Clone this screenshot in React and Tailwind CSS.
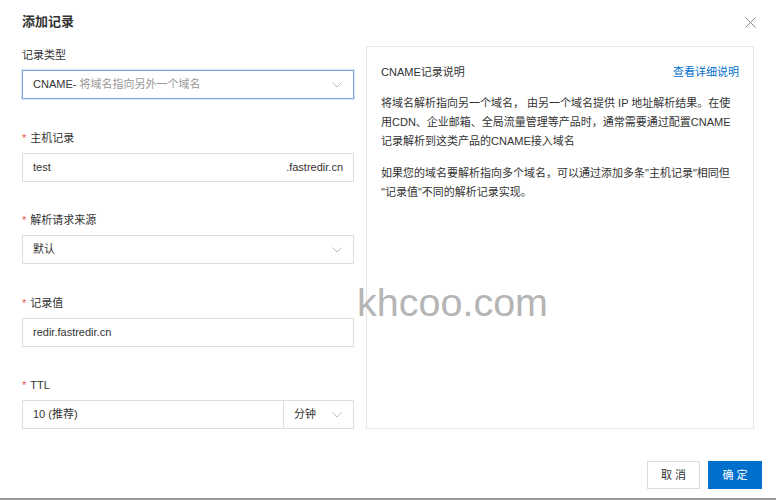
import React from 'react';

const font = { fontFamily: '"Liberation Sans", "Noto Sans CJK SC", sans-serif' };

const Chevron = () => (
  <svg width="10" height="6" viewBox="0 0 10 6" className="shrink-0">
    <path d="M0.5 0.5 L5 5 L9.5 0.5" fill="none" stroke="#bdbdbd" strokeWidth="1" />
  </svg>
);

const Label = ({ required, children }) => (
  <div className="text-[11px] leading-[18px] mb-[6px] text-[#333] flex items-center">
    {required && <span className="text-[#e5574a] mr-[4px] text-[11px]">*</span>}
    {children}
  </div>
);

const App = () => {
  return (
    <div className="relative h-[500px] w-[776px] bg-white border-b-2 border-[#9a9a9a] flex flex-col" style={font}>
      {/* 标题 */}
      <div className="h-[46px] flex items-center justify-between pl-[22px] pr-[20px] pb-[2px]">
        <h2 className="text-[13px] font-semibold text-[#333]">添加记录</h2>
        <svg width="11" height="11" viewBox="0 0 11 11">
          <path d="M0.5 0.5 L10.5 10.5 M10.5 0.5 L0.5 10.5" stroke="#8a8a8a" strokeWidth="1" />
        </svg>
      </div>

      {/* 表单 + 说明 */}
      <div className="flex gap-[12px] px-[22px]">
        <div className="w-[332px] flex flex-col gap-[29.5px]">
          <div>
            <Label>记录类型</Label>
            <div className="h-[29px] border border-[#78abe0] shadow-[0_0_0_1px_#d6e6f7] flex items-center justify-between pl-[10px] pr-[11px] text-[11px]">
              <span>
                <span className="text-[#333]">CNAME-</span>
                <span className="text-[#999]"> 将域名指向另外一个域名</span>
              </span>
              <Chevron />
            </div>
          </div>

          <div>
            <Label required>主机记录</Label>
            <div className="h-[29px] border border-[#dedede] flex items-center justify-between px-[10px] text-[11px] text-[#333]">
              <span>test</span>
              <span>.fastredir.cn</span>
            </div>
          </div>

          <div>
            <Label required>解析请求来源</Label>
            <div className="h-[29px] border border-[#dedede] flex items-center justify-between pl-[10px] pr-[11px] text-[11px] text-[#333]">
              <span>默认</span>
              <Chevron />
            </div>
          </div>

          <div>
            <Label required>记录值</Label>
            <div className="h-[29px] border border-[#dedede] flex items-center px-[10px] text-[11px] text-[#333]">
              redir.fastredir.cn
            </div>
          </div>

          <div>
            <Label required>TTL</Label>
            <div className="h-[29px] border border-[#dedede] flex text-[11px] text-[#333]">
              <div className="flex-1 flex items-center px-[10px] border-r border-[#dedede]">10 (推荐)</div>
              <div className="w-[69px] flex items-center justify-between pl-[10px] pr-[11px]">
                <span>分钟</span>
                <Chevron />
              </div>
            </div>
          </div>
        </div>

        <div className="w-[388px] border border-[#e6e6e6] px-[14px] pt-[16px] text-[11px] text-[#333]">
          <div className="flex items-center justify-between leading-[18px]">
            <span>CNAME记录说明</span>
            <a className="text-[#0070cc] cursor-pointer">查看详细说明</a>
          </div>
          <p className="mt-[13px] leading-[19px] whitespace-nowrap">
            将域名解析指向另一个域名， 由另一个域名提供 IP 地址解析结果。在使
            <br />
            用CDN、企业邮箱、全局流量管理等产品时，通常需要通过配置CNAME
            <br />
            记录解析到这类产品的CNAME接入域名
          </p>
          <p className="mt-[13px] leading-[19px] whitespace-nowrap">
            如果您的域名要解析指向多个域名，可以通过添加多条"主机记录"相同但
            <br />
            "记录值"不同的解析记录实现。
          </p>
        </div>
      </div>

      {/* 底部按钮 */}
      <div className="flex justify-end gap-[8px] px-[14px] mt-[32px]">
        <button className="h-[28px] w-[53px] border border-[#dcdcdc] bg-white text-[11px] text-[#333] tracking-[3px] pl-[3px]">
          取消
        </button>
        <button className="h-[28px] w-[54px] bg-[#0070cc] text-[11px] text-white tracking-[3px] pl-[3px]">
          确定
        </button>
      </div>

      {/* 水印 */}
      <div className="absolute left-[357px] top-[283px] text-[39.5px] leading-none text-[#b5b5b5] pointer-events-none">
        khcoo.com
      </div>
    </div>
  );
};

export default App;
